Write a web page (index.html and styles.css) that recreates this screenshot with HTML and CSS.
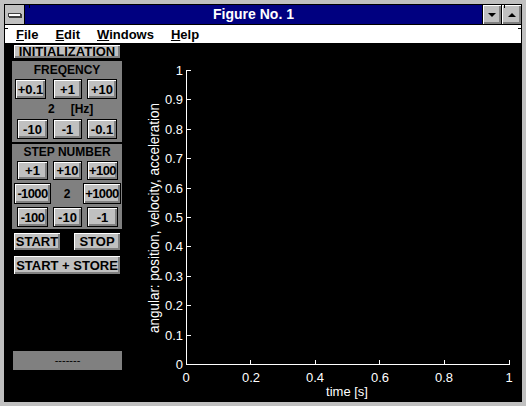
FILE: index.html
```html
<!DOCTYPE html>
<html>
<head>
<meta charset="utf-8">
<link rel="stylesheet" href="styles.css">
</head>
<body>
<div class="window">
  <div class="inner">
    <div class="titlebar">
      <div class="sysbox"><span class="sysbar"></span></div>
      <div class="title">Figure No. 1</div>
      <div class="tbtn"><span class="tri down"></span></div>
      <div class="tbtn wide"><span class="tri up"></span></div>
    </div>
    <div class="menubar">
      <span class="mi"><u>F</u>ile</span>
      <span class="mi"><u>E</u>dit</span>
      <span class="mi"><u>W</u>indows</span>
      <span class="mi"><u>H</u>elp</span>
    </div>
    <div class="content">
      <div class="side">
        <div class="btn init">INITIALIZATION</div>
        <div class="group freq">
          <div class="gtitle">FREQENCY</div>
          <div class="row r20">
            <div class="btn w31 ml3">+0.1</div>
            <div class="btn w29 ml7">+1</div>
            <div class="btn w30 ml5">+10</div>
          </div>
          <div class="row r20 vals">
            <span class="v1">2</span><span class="v2">[Hz]</span>
          </div>
          <div class="row r20">
            <div class="btn w31 ml5">-10</div>
            <div class="btn w29 ml5">-1</div>
            <div class="btn w30 ml5">-0.1</div>
          </div>
        </div>
        <div class="group step">
          <div class="gtitle st">STEP NUMBER</div>
          <div class="row r19">
            <div class="btn w31 ml5">+1</div>
            <div class="btn w29 ml5">+10</div>
            <div class="btn w31 ml5 tight">+100</div>
          </div>
          <div class="row r21 mt3">
            <div class="btn w37 ml2 tight">-1000</div>
            <span class="sv">2</span>
            <div class="btn w38 tight">+1000</div>
          </div>
          <div class="row r20 mt3">
            <div class="btn w31 ml5 tight">-100</div>
            <div class="btn w29 ml5">-10</div>
            <div class="btn w31 ml5">-1</div>
          </div>
        </div>
        <div class="startrow">
          <div class="btn w48">START</div>
          <div class="btn w48 ml12">STOP</div>
        </div>
        <div class="btn store">START + STORE</div>
        <div class="status">-------</div>
      </div>
      <svg class="plot" width="391" height="358" viewBox="130 43 391 358" xmlns="http://www.w3.org/2000/svg">
        <g stroke="#fff" stroke-width="1" shape-rendering="crispEdges">
          <line x1="186.5" y1="70" x2="186.5" y2="365"/>
          <line x1="186" y1="364.5" x2="510" y2="364.5"/>
          <line x1="186" y1="70.5" x2="191" y2="70.5"/>
          <line x1="186" y1="99.5" x2="191" y2="99.5"/>
          <line x1="186" y1="129.5" x2="191" y2="129.5"/>
          <line x1="186" y1="158.5" x2="191" y2="158.5"/>
          <line x1="186" y1="188.5" x2="191" y2="188.5"/>
          <line x1="186" y1="217.5" x2="191" y2="217.5"/>
          <line x1="186" y1="246.5" x2="191" y2="246.5"/>
          <line x1="186" y1="276.5" x2="191" y2="276.5"/>
          <line x1="186" y1="305.5" x2="191" y2="305.5"/>
          <line x1="186" y1="335.5" x2="191" y2="335.5"/>
          <line x1="250.5" y1="360" x2="250.5" y2="364"/>
          <line x1="315.5" y1="360" x2="315.5" y2="364"/>
          <line x1="379.5" y1="360" x2="379.5" y2="364"/>
          <line x1="444.5" y1="360" x2="444.5" y2="364"/>
          <line x1="509.5" y1="360" x2="509.5" y2="365"/>
        </g>
        <g class="ticks" fill="#fff" text-anchor="end">
          <text x="183" y="75">1</text>
          <text x="183" y="104">0.9</text>
          <text x="183" y="134">0.8</text>
          <text x="183" y="163">0.7</text>
          <text x="183" y="193">0.6</text>
          <text x="183" y="222">0.5</text>
          <text x="183" y="251">0.4</text>
          <text x="183" y="281">0.3</text>
          <text x="183" y="310">0.2</text>
          <text x="183" y="340">0.1</text>
          <text x="183" y="369">0</text>
        </g>
        <g class="ticks" fill="#fff" text-anchor="middle">
          <text x="186" y="382">0</text>
          <text x="251" y="382">0.2</text>
          <text x="315" y="382">0.4</text>
          <text x="380" y="382">0.6</text>
          <text x="444" y="382">0.8</text>
          <text x="509" y="382">1</text>
          <text x="347" y="396">time [s]</text>
          <text class="ylabel" transform="translate(159,218) rotate(-90)" x="0" y="0" textLength="230" lengthAdjust="spacingAndGlyphs">angular: position, velocity, acceleration</text>
        </g>
      </svg>
    </div>
  </div>
  <span class="mark mh" style="top:24px;left:0"></span>
  <span class="mark mv" style="top:0;left:25px"></span>
  <span class="mark mv" style="top:0;left:500px"></span>
  <span class="mark mh" style="top:24px;right:0"></span>
  <span class="mark mh" style="top:382px;left:0"></span>
  <span class="mark mv" style="bottom:0;left:25px"></span>
  <span class="mark mh" style="top:382px;right:0"></span>
  <span class="mark mv" style="bottom:0;left:502px"></span>
</div>
</body>
</html>
```

FILE: styles.css
```css
body {
  margin: 0;
  background: #c0c0c0;
}
.window {
  position: relative;
  width: 526px;
  height: 406px;
  box-sizing: border-box;
  border: 4px solid #c0c0c0;
  display: flex;
  font-family: "Liberation Sans", Arial, sans-serif;
}
.inner {
  flex: 1;
  border: 1px solid #000;
  display: flex;
  flex-direction: column;
  background: #000;
}
.titlebar {
  height: 19px;
  display: flex;
  border-bottom: 1px solid #000;
}
.sysbox {
  width: 19px;
  background: #c0c0c0;
  border-right: 1px solid #000;
  display: flex;
  align-items: center;
  justify-content: center;
}
.sysbar {
  width: 11px;
  height: 2px;
  background: #fff;
  border: 1px solid #404040;
  box-shadow: 1px 1px 0 #404040;
}
.title {
  flex: 1;
  background: #000080;
  color: #fff;
  font-weight: bold;
  font-size: 14px;
  line-height: 19px;
  text-align: center;
}
.tbtn {
  width: 18px;
  border-left: 1px solid #000;
  background: #c0c0c0;
  box-shadow: inset 1px 1px #fff, inset -1px -1px #808080, inset -2px -2px #808080;
  display: flex;
  align-items: center;
  justify-content: center;
}
.tbtn.wide {
  width: 19px;
}
.tri {
  width: 0;
  height: 0;
  border-left: 4px solid transparent;
  border-right: 4px solid transparent;
}
.tri.down {
  border-top: 4px solid #000;
}
.tri.up {
  border-bottom: 4px solid #000;
}
.menubar {
  height: 18px;
  background: #fff;
  display: flex;
  align-items: center;
  padding-left: 11px;
  gap: 17px;
}
.mi {
  font-weight: bold;
  font-size: 13px;
  color: #000;
}
.content {
  flex: 1;
  display: flex;
  background: #000;
}
.side {
  width: 125px;
  display: flex;
  flex-direction: column;
  font-weight: bold;
  font-size: 12px;
}
.btn {
  box-sizing: border-box;
  background: #c0c0c0;
  border: 1px solid #000;
  box-shadow: inset 1px 1px #fff, inset -1px -1px #808080, inset -2px -2px #808080;
  color: #000;
  display: flex;
  align-items: center;
  justify-content: center;
  font-size: 13px;
  font-weight: bold;
  white-space: nowrap;
}
.btn.tight {
  letter-spacing: -0.6px;
}
.init {
  margin: 1px 0 0 8px;
  width: 108px;
  height: 15px;
}
.group {
  margin-left: 7px;
  width: 110px;
  background: #808080;
  display: flex;
  flex-direction: column;
}
.freq {
  margin-top: 2px;
  height: 81px;
}
.step {
  margin-top: 2px;
  height: 85px;
}
.gtitle {
  height: 18px;
  line-height: 18px;
  text-align: center;
  color: #000;
}
.gtitle.st {
  height: 17px;
  line-height: 17px;
}
.row {
  display: flex;
  align-items: stretch;
}
.r19 { height: 19px; }
.r20 { height: 20px; }
.r21 { height: 21px; }
.mt3 { margin-top: 3px; }
.w29 { width: 29px; }
.w30 { width: 30px; }
.w31 { width: 31px; }
.w37 { width: 37px; }
.w38 { width: 38px; }
.w48 { width: 48px; }
.ml2 { margin-left: 2px; }
.ml3 { margin-left: 3px; }
.ml5 { margin-left: 5px; }
.ml7 { margin-left: 7px; }
.ml12 { margin-left: 12px; }
.vals {
  align-items: center;
  color: #000;
}
.v1 {
  margin-left: 36px;
}
.v2 {
  margin-left: 16px;
}
.sv {
  width: 32px;
  display: flex;
  align-items: center;
  justify-content: center;
  color: #000;
}
.startrow {
  display: flex;
  margin: 3px 0 0 8px;
  height: 19px;
}
.store {
  margin: 4px 0 0 8px;
  width: 108px;
  height: 20px;
}
.status {
  margin: 76px 0 0 8px;
  width: 109px;
  height: 19px;
  background: #808080;
  color: #000;
  font-size: 11px;
  font-weight: normal;
  line-height: 19px;
  text-align: center;
}
.plot {
  display: block;
}
.ticks text {
  font-family: "Liberation Sans", Arial, sans-serif;
  font-size: 13px;
}
.ticks .ylabel {
  font-size: 14px;
}
.mark {
  position: absolute;
  background: #000;
}
.mh {
  width: 4px;
  height: 1px;
}
.mv {
  width: 1px;
  height: 4px;
}
```
